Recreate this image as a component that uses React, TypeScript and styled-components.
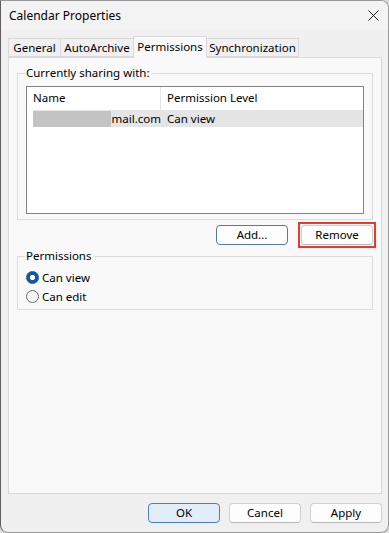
import styled, { createGlobalStyle } from "styled-components";

const GlobalStyle = createGlobalStyle`
  html, body {
    margin: 0;
    padding: 0;
    background: #dcdcdc;
  }
  * {
    box-sizing: border-box;
  }
  body {
    font-family: "Noto Sans", "Open Sans", sans-serif;
    font-size: 11.5px;
    color: #000;
  }
`;

const tabs = [
  { label: "General", width: 53 },
  { label: "AutoArchive", width: 74 },
  { label: "Permissions", width: 74 },
  { label: "Synchronization", width: 93 },
];

export default function App() {
  return (
    <>
      <GlobalStyle />
      <Window>
        <TitleBar>
          <Title>Calendar Properties</Title>
          <CloseIcon width="11" height="11" viewBox="0 0 11 11">
            <path d="M0.5 0.5 L10.5 10.5 M10.5 0.5 L0.5 10.5" stroke="#1b1b1b" strokeWidth="1" />
          </CloseIcon>
        </TitleBar>

        <Content>
          <TabStrip>
            {tabs.map((t) => (
              <Tab key={t.label} $active={t.label === "Permissions"} $w={t.width}>
                {t.label}
              </Tab>
            ))}
          </TabStrip>

          <Panel>
            <Group>
              <Legend>Currently sharing with:</Legend>
              <ListBox>
                <HeaderRow>
                  <HeaderCell $first>Name</HeaderCell>
                  <HeaderCell>Permission Level</HeaderCell>
                </HeaderRow>
                <ItemRow>
                  <NameCell>
                    <Redacted />
                    mail.com
                  </NameCell>
                  <LevelCell>Can view</LevelCell>
                </ItemRow>
              </ListBox>
            </Group>

            <ActionRow>
              <Btn $variant="focus">Add...</Btn>
              <Marker>
                <Btn>Remove</Btn>
              </Marker>
            </ActionRow>

            <RadioGroup>
              <Legend>Permissions</Legend>
              <RadioRow>
                <Radio $checked />
                Can view
              </RadioRow>
              <RadioRow>
                <Radio />
                Can edit
              </RadioRow>
            </RadioGroup>
          </Panel>

          <Footer>
            <Btn $variant="default">OK</Btn>
            <Btn>Cancel</Btn>
            <Btn>Apply</Btn>
          </Footer>
        </Content>
      </Window>
    </>
  );
}

const Window = styled.div`
  width: 389px;
  height: 533px;
  background: #f0f0f0;
  border: 1px solid #9a9a9a;
  border-left-color: #5e5e5e;
  border-radius: 0 8px 8px 8px;
  display: flex;
  flex-direction: column;
  overflow: hidden;
`;

const TitleBar = styled.div`
  height: 29px;
  display: flex;
  align-items: center;
  justify-content: space-between;
  padding: 0 9px 1px 8px;
  background: #f3f3f3;
`;

const Title = styled.span`
  font-size: 12px;
`;

const CloseIcon = styled.svg`
  display: block;
`;

const Content = styled.div`
  flex: 1;
  display: flex;
  flex-direction: column;
  padding: 6px 6px 9px 7px;
`;

const TabStrip = styled.div`
  display: flex;
  align-items: flex-end;
  height: 21px;
  padding-left: 1px;
`;

const Tab = styled.div<{ $active?: boolean; $w: number }>`
  width: ${({ $w }) => $w}px;
  height: ${({ $active }) => ($active ? 22 : 19)}px;
  margin-left: -1px;
  margin-bottom: ${({ $active }) => ($active ? -1 : 0)}px;
  display: flex;
  align-items: center;
  justify-content: center;
  padding-bottom: ${({ $active }) => ($active ? 2 : 0)}px;
  border: 1px solid #d9d9d9;
  border-bottom: ${({ $active }) => ($active ? "none" : "1px solid #d9d9d9")};
  background: ${({ $active }) => ($active ? "#f9f9f9" : "#f0f0f0")};
  position: relative;
  z-index: ${({ $active }) => ($active ? 1 : 0)};
  white-space: nowrap;
`;

const Panel = styled.div`
  height: 437px;
  background: #f9f9f9;
  border: 1px solid #d9d9d9;
  padding: 7px 8px 0 8px;
  display: flex;
  flex-direction: column;
`;

const Group = styled.fieldset`
  margin: 0;
  padding: 5px 8px 5px 8px;
  border: 1px solid #dcdcdc;
  min-width: 0;
`;

const Legend = styled.legend`
  padding: 0 2px 0 1px;
  margin-left: -1px;
  line-height: 16px;
  font-size: 11.5px;
`;

const ListBox = styled.div`
  height: 128px;
  background: #fff;
  border: 1px solid #838383;
  padding-left: 6px;
`;

const HeaderRow = styled.div`
  display: grid;
  grid-template-columns: 128px 1fr;
  height: 23px;
`;

const HeaderCell = styled.div<{ $first?: boolean }>`
  display: flex;
  align-items: center;
  padding-left: ${({ $first }) => ($first ? 0 : 6)}px;
  border-right: ${({ $first }) => ($first ? "1px solid #e5e5e5" : "none")};
  padding-bottom: 2px;
`;

const ItemRow = styled.div`
  display: grid;
  grid-template-columns: 128px 1fr;
  height: 17px;
  background: #e5e5e5;
  align-items: center;
`;

const NameCell = styled.div`
  display: flex;
  align-items: center;
  gap: 1px;
  white-space: nowrap;
`;

const Redacted = styled.span`
  width: 81px;
  height: 16px;
  background: #c3c3c3;
  margin-top: 1px;
`;

const LevelCell = styled.div`
  padding-left: 6px;
`;

const ActionRow = styled.div`
  display: flex;
  justify-content: flex-end;
  align-items: center;
  gap: 13px;
  margin-top: 5px;
`;

const Marker = styled.span`
  display: flex;
  padding: 1px;
  margin: -3px -3px -3px -3px;
  border: 2px solid #e8382f;
`;

const Btn = styled.button<{ $variant?: "plain" | "focus" | "default" }>`
  width: 72px;
  height: 20px;
  padding: 0 0 1px;
  font-family: "Noto Sans", "Open Sans", sans-serif;
  font-size: 11.5px;
  color: #000;
  border-radius: 4px;
  border: 1px solid
    ${({ $variant }) =>
      $variant === "focus" ? "#56789c" : $variant === "default" ? "#4f7fb8" : "#d0d0d0"};
  border-bottom-color: ${({ $variant }) =>
    $variant === "focus" ? "#56789c" : $variant === "default" ? "#4f7fb8" : "#b8b8b8"};
  background: ${({ $variant }) => ($variant === "default" ? "#e1edf9" : "#fdfdfd")};
`;

const RadioGroup = styled.fieldset`
  margin: 3px 0 0;
  padding: 4px 8px 3px 8px;
  border: 1px solid #dcdcdc;
  min-width: 0;
`;

const RadioRow = styled.div`
  display: flex;
  align-items: center;
  gap: 3px;
  height: 19px;
`;

const Radio = styled.span<{ $checked?: boolean }>`
  width: 13px;
  height: 13px;
  border-radius: 50%;
  flex: none;
  border: 1px solid ${({ $checked }) => ($checked ? "#0f5aa5" : "#6a6a6a")};
  background: ${({ $checked }) =>
    $checked ? "radial-gradient(circle, #fff 0 2.4px, #0f5aa5 2.9px)" : "#f6f6f6"};
`;

const Footer = styled.div`
  display: flex;
  justify-content: flex-end;
  gap: 9px;
  margin-top: 9px;
`;
